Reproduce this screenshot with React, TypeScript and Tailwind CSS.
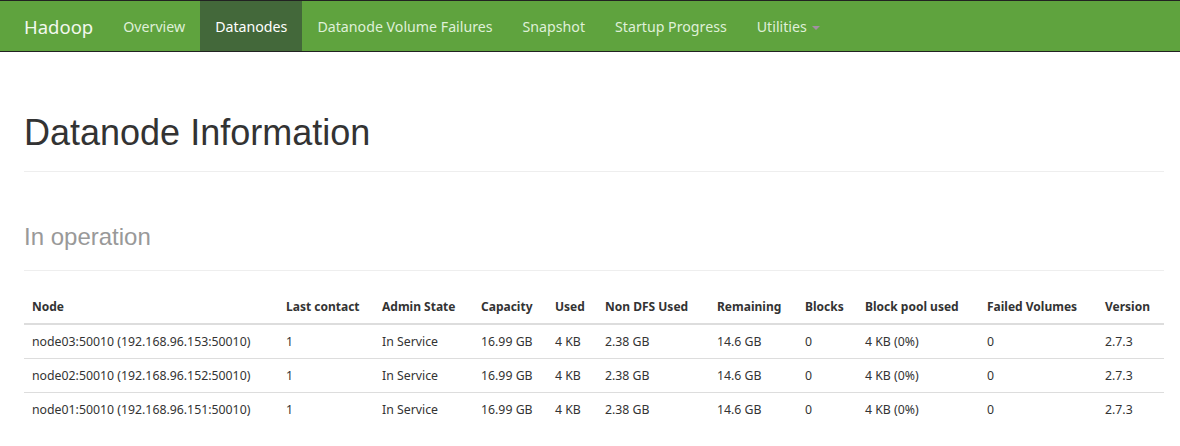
import React from "react";

const nav = ["Overview", "Datanodes", "Datanode Volume Failures", "Snapshot", "Startup Progress"];

const cols = [
  { label: "Node", w: "w-[254px]" },
  { label: "Last contact", w: "w-[96px]" },
  { label: "Admin State", w: "w-[99px]" },
  { label: "Capacity", w: "w-[74px]" },
  { label: "Used", w: "w-[50px]" },
  { label: "Non DFS Used", w: "w-[112px]" },
  { label: "Remaining", w: "w-[88px]" },
  { label: "Blocks", w: "w-[60px]" },
  { label: "Block pool used", w: "w-[122px]" },
  { label: "Failed Volumes", w: "w-[118px]" },
  { label: "Version", w: "" },
];

const rows = ["153", "152", "151"].map((ip, i) => [
  `node0${3 - i}:50010 (192.168.96.${ip}:50010)`,
  "1",
  "In Service",
  "16.99 GB",
  "4 KB",
  "2.38 GB",
  "14.6 GB",
  "0",
  "4 KB (0%)",
  "0",
  "2.7.3",
]);

const ui = "font-['Noto_Sans','Open_Sans',sans-serif]";

export default function App() {
  return (
    <div className="w-[1180px] h-[446px] bg-white overflow-hidden">
      <div className={`h-[52px] bg-[#5fa33e] border-y border-[#222] flex items-stretch px-[9px] ${ui}`}>
        <div className="px-[15px] pt-[2px] flex items-center text-[18.5px] text-[#f2f8ee]">Hadoop</div>
        {nav.map(n => (
          <div
            key={n}
            className={`px-[15px] pt-[2px] flex items-center text-[14.2px] text-[#dff0d8] ${n === "Datanodes" ? "bg-[#43683a] text-white" : ""}`}
          >
            {n}
          </div>
        ))}
        <div className="px-[15px] pt-[2px] flex items-center text-[14.2px] text-[#dff0d8] gap-[5px]">
          Utilities
          <span className="w-0 h-0 border-x-[4px] border-x-transparent border-t-[4px] border-t-[#a38fa3] mt-[2px]" />
        </div>
      </div>

      <div className="px-[24px] w-[1188px]">
        <div className="mt-[61px] pb-[18px] border-b border-[#eee]">
          <h1 className="font-['Liberation_Sans',Arial,sans-serif] text-[36px] leading-[40px] text-[#333]">Datanode Information</h1>
        </div>
        <div className="mt-[51px] pb-[19px] border-b border-[#eee]">
          <h2 className="font-['Liberation_Sans',Arial,sans-serif] text-[24px] leading-[28px] text-[#999]">In operation</h2>
        </div>

        <table className={`w-[1140px] mt-[18px] text-[12.3px] text-[#333] ${ui} border-collapse`}>
          <thead>
            <tr className="border-b-2 border-[#ddd]">
              {cols.map(c => (
                <th key={c.label} className={`${c.w} text-left font-bold text-[12px] px-[8px] pt-[8px] pb-[6px] leading-[20px]`}>
                  {c.label}
                </th>
              ))}
            </tr>
          </thead>
          <tbody>
            {rows.map((r, i) => (
              <tr key={i} className={i > 0 ? "border-t border-[#ddd]" : ""}>
                {r.map((v, j) => (
                  <td key={j} className="px-[8px] py-[6.5px] leading-[20px]">
                    {v}
                  </td>
                ))}
              </tr>
            ))}
          </tbody>
        </table>
      </div>
    </div>
  );
}
